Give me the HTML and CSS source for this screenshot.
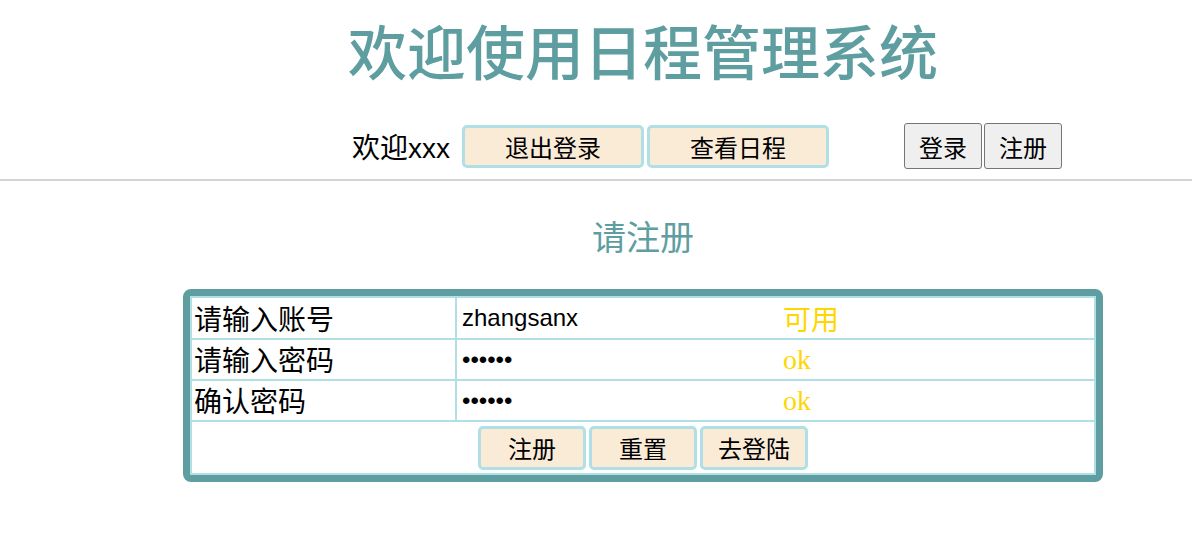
FILE: index.html
```html
<!DOCTYPE html>
<html lang="zh">

<head>
    <meta charset="UTF-8">
    <meta name="viewport" content="width=device-width, initial-scale=1.0">
    <title>日程管理系统</title>
    <link rel="stylesheet" href="styles.css">
</head>

<body>
    <div class="header">
        <h1 class="title">欢迎使用日程管理系统</h1>
        <div class="nav">
            <span class="welcome">欢迎xxx</span>
            <button class="btn">退出登录</button>
            <button class="btn">查看日程</button>
            <div class="guest">
                <button class="plain">登录</button>
                <button class="plain">注册</button>
            </div>
        </div>
    </div>

    <div class="content">
        <h3 class="sub">请注册</h3>
        <div class="box">
            <table class="form">
                <tr>
                    <td class="label">请输入账号</td>
                    <td class="field">
                        <div class="line">
                            <input type="text" value="zhangsanx">
                            <span class="msg">可用</span>
                        </div>
                    </td>
                </tr>
                <tr>
                    <td class="label">请输入密码</td>
                    <td class="field">
                        <div class="line">
                            <input type="password" value="123456">
                            <span class="msg">ok</span>
                        </div>
                    </td>
                </tr>
                <tr>
                    <td class="label">确认密码</td>
                    <td class="field">
                        <div class="line">
                            <input type="password" value="123456">
                            <span class="msg">ok</span>
                        </div>
                    </td>
                </tr>
                <tr>
                    <td class="actions" colspan="2">
                        <div class="btns">
                            <button class="btn small">注册</button>
                            <button class="btn small">重置</button>
                            <button class="btn small">去登陆</button>
                        </div>
                    </td>
                </tr>
            </table>
        </div>
    </div>
</body>

</html>
```

FILE: styles.css
```css
body {
    margin: 0;
    font-family: "Liberation Sans", "Noto Sans CJK SC", sans-serif;
    color: #000;
}

.header {
    border-bottom: 2px solid #d3d3d3;
    padding-bottom: 10px;
}

.title {
    margin: 10px 0 0;
    padding-left: 94px;
    text-align: center;
    font-family: "Noto Sans CJK SC", sans-serif;
    font-size: 59px;
    font-weight: 500;
    line-height: 80px;
    color: #5f9ea0;
}

.nav {
    display: flex;
    align-items: center;
    margin-top: 33px;
    padding-left: 352px;
    height: 46px;
}

.welcome {
    font-size: 28px;
    margin-right: 12px;
}

.btn {
    width: 182px;
    height: 43px;
    margin-right: 3px;
    background: #faebd7;
    border: 3px solid #b0e0e6;
    border-radius: 5px;
    font-family: "Liberation Sans", "Noto Sans CJK SC", sans-serif;
    font-size: 24px;
    color: #000;
    padding: 0;
    cursor: pointer;
}

.guest {
    display: flex;
    gap: 2px;
    margin-left: 72px;
}

.plain {
    width: 78px;
    height: 46px;
    padding: 0;
    background: #efefef;
    border: 1px solid #767676;
    border-radius: 3px;
    font-family: "Liberation Sans", "Noto Sans CJK SC", sans-serif;
    font-size: 24px;
    color: #000;
}

.content {
    padding-left: 94px;
}

.sub {
    margin: 35px 0 33px;
    text-align: center;
    font-family: "Noto Sans CJK SC", sans-serif;
    font-size: 34px;
    font-weight: normal;
    line-height: 40px;
    color: #5f9ea0;
}

.box {
    width: 906px;
    margin: 0 auto;
    border: 7px solid #5f9ea0;
    border-radius: 8px;
}

.form {
    width: 100%;
    border-spacing: 0;
    border: 1px solid #b0e0e6;
}

.form td {
    border: 1px solid #b0e0e6;
    height: 39px;
    padding: 0;
}

.form .label {
    width: 261px;
    padding-left: 2px;
    font-family: "Noto Sans CJK SC", sans-serif;
    font-size: 28px;
    line-height: 39px;
}

.form .field {
    padding-left: 3px;
}

.line {
    display: flex;
    align-items: center;
}

.line input {
    width: 319px;
    padding: 1px 2px;
    border: none;
    outline: none;
    background: transparent;
    font-family: "Liberation Sans", "Noto Sans CJK SC", sans-serif;
    font-size: 24px;
    color: #000;
}

.msg {
    font-family: "Liberation Serif", "Noto Sans CJK SC", serif;
    font-size: 28px;
    color: #ffd700;
}

.form .actions {
    height: 51px;
}

.btns {
    display: flex;
    justify-content: center;
    gap: 3px;
}

.btn.small {
    width: 108px;
    height: 44px;
    margin: 0;
}
```
